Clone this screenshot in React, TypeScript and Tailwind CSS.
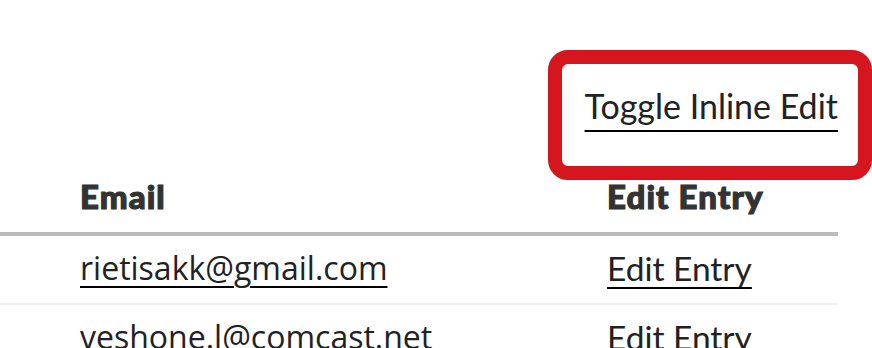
const rows = [
  { email: 'rietisakk@gmail.com', linked: true },
  { email: 'veshone.l@comcast.net', linked: false },
];

export default function App() {
  return (
    <div className="w-[872px] h-[348px] overflow-hidden bg-white text-[#222] font-['Lato',sans-serif]">
      <div className="w-[838px]">
        <div className="flex justify-end pt-[50px]">
          <div className="mr-[-34px] border-[14px] border-[#d5161f] rounded-[20px] pt-[22px] pb-[40px] pl-[23px] pr-[20px]">
            <a
              href="#"
              className="block text-[34px] leading-[40px] text-[#222] underline decoration-2 decoration-black underline-offset-[11px]"
            >
              Toggle Inline Edit
            </a>
          </div>
        </div>
        <table className="w-full border-collapse">
          <thead>
            <tr className="border-b-4 border-[#bbbbbb]">
              <th className="pl-[80px] pt-0 pb-[20px] text-left text-[33px] leading-8 font-black tracking-[1.1px] text-[#333] [-webkit-text-stroke:1.2px_#333]">Email</th>
              <th className="w-[231px] pt-0 pb-[20px] text-left text-[33px] leading-8 font-black tracking-[1.1px] text-[#333] [-webkit-text-stroke:1.2px_#333]">Edit Entry</th>
            </tr>
          </thead>
          <tbody>
            {rows.map((r) => (
              <tr key={r.email} className="border-b-2 border-[#eeeeee]">
                <td className="pl-[80px] pt-[12px] pb-[15px] text-[32px] leading-10 font-['Open_Sans',sans-serif]">
                  {r.linked ? (
                    <a href="#" className="underline decoration-2 decoration-black underline-offset-[6px]">
                      {r.email}
                    </a>
                  ) : (
                    r.email
                  )}
                </td>
                <td className="pt-[12px] pb-[15px] text-[33.5px] leading-10">
                  {r.linked ? (
                    <a href="#" className="underline decoration-2 decoration-black underline-offset-[6px]">
                      Edit Entry
                    </a>
                  ) : (
                    'Edit Entry'
                  )}
                </td>
              </tr>
            ))}
          </tbody>
        </table>
      </div>
    </div>
  );
}
